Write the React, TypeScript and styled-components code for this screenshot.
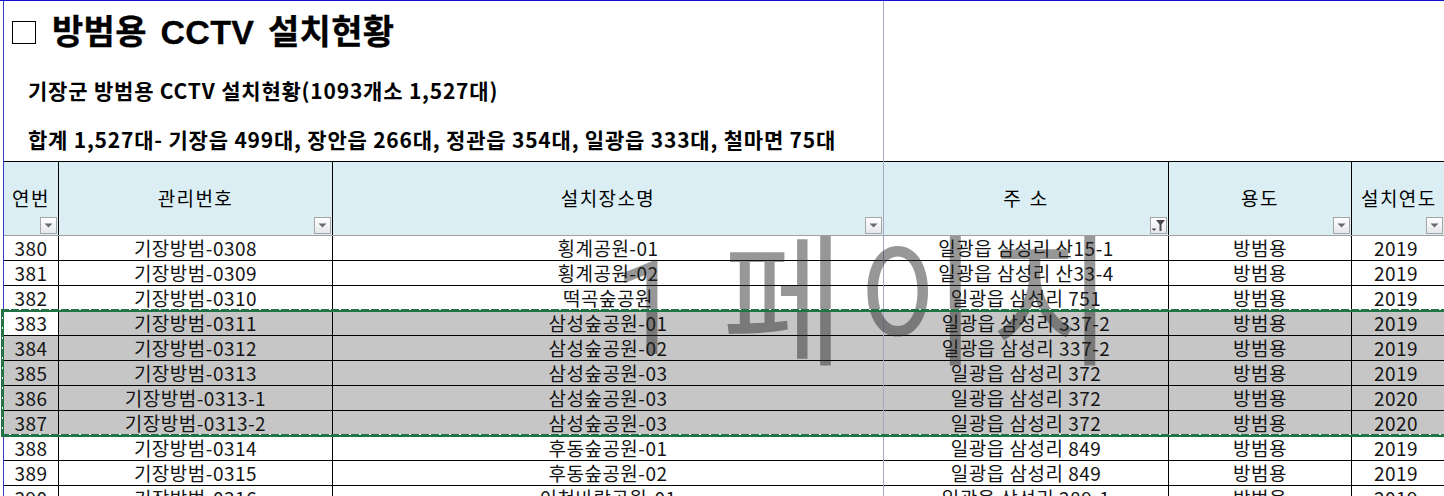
import React from "react";
import styled, { createGlobalStyle } from "styled-components";

const GlobalStyle = createGlobalStyle`
  html, body {
    margin: 0;
    padding: 0;
    background: #fff;
    overflow: hidden;
  }
`;

type Row = { no: number; code: string; place: string; addr: string; use: string; year: number };

const rows: Row[] = [
  { no: 380, code: "기장방범-0308", place: "횡계공원-01", addr: "일광읍 삼성리 산15-1", use: "방범용", year: 2019 },
  { no: 381, code: "기장방범-0309", place: "횡계공원-02", addr: "일광읍 삼성리 산33-4", use: "방범용", year: 2019 },
  { no: 382, code: "기장방범-0310", place: "떡곡숲공원", addr: "일광읍 삼성리 751", use: "방범용", year: 2019 },
  { no: 383, code: "기장방범-0311", place: "삼성숲공원-01", addr: "일광읍 삼성리 337-2", use: "방범용", year: 2019 },
  { no: 384, code: "기장방범-0312", place: "삼성숲공원-02", addr: "일광읍 삼성리 337-2", use: "방범용", year: 2019 },
  { no: 385, code: "기장방범-0313", place: "삼성숲공원-03", addr: "일광읍 삼성리 372", use: "방범용", year: 2019 },
  { no: 386, code: "기장방범-0313-1", place: "삼성숲공원-03", addr: "일광읍 삼성리 372", use: "방범용", year: 2020 },
  { no: 387, code: "기장방범-0313-2", place: "삼성숲공원-03", addr: "일광읍 삼성리 372", use: "방범용", year: 2020 },
  { no: 388, code: "기장방범-0314", place: "후동숲공원-01", addr: "일광읍 삼성리 849", use: "방범용", year: 2019 },
  { no: 389, code: "기장방범-0315", place: "후동숲공원-02", addr: "일광읍 삼성리 849", use: "방범용", year: 2019 },
  { no: 390, code: "기장방범-0316", place: "이천바람공원-01", addr: "일광읍 삼성리 289-1", use: "방범용", year: 2019 },
];

const columns = "55px 274px 551px 285px 183px 1fr";
const font = `"Noto Sans CJK KR", "Noto Sans", sans-serif`;

const Sheet = styled.div`
  position: relative;
  width: 1444px;
  height: 496px;
  overflow: hidden;
  box-sizing: border-box;
  padding-left: 3px;
  border-top: 1px solid #1010d0;
  font-family: ${font};
  color: #000;
  background: #fff;
`;

const Body = styled.div`
  border-left: 1px solid #3a3ac8;
  height: 100%;
`;

const TitleBlock = styled.div`
  height: 160px;
  box-sizing: border-box;
  padding: 13px 0 0 8px;
`;

const Title = styled.h1`
  margin: 0;
  font-size: 34px;
  line-height: 36px;
  font-weight: 700;
  font-family: "Liberation Sans", ${font};
  letter-spacing: 0.3px;
  word-spacing: 4px;
  -webkit-text-stroke: 0.3px #000;
  display: flex;
  align-items: center;
  gap: 16px;
`;

const TitleBox = styled.span`
  display: block;
  width: 24px;
  height: 23px;
  box-sizing: border-box;
  border: 1.5px solid #000;
`;

const Sub = styled.p<{ $top: number }>`
  margin: ${(p) => p.$top}px 0 0 16px;
  font-size: 21px;
  line-height: 26px;
  font-weight: 700;
  letter-spacing: 0.8px;
  white-space: nowrap;
`;

const Grid = styled.div`
  display: grid;
  grid-template-columns: ${columns};
`;

const HeadCell = styled.div`
  position: relative;
  height: 74px;
  box-sizing: border-box;
  border-top: 1px solid #000;
  border-right: 1px solid #000;
  background: #daeef3;
  font-size: 19px;
  letter-spacing: 1.4px;
  word-spacing: 2px;
  display: flex;
  align-items: center;
  justify-content: center;
  padding-bottom: 3px;
  white-space: nowrap;
  &:last-child { border-right: 0; justify-content: flex-start; padding-left: 9px; }
`;

const FilterButton = styled.span`
  position: absolute;
  right: 1px;
  bottom: 1px;
  width: 17px;
  height: 17px;
  box-sizing: border-box;
  border: 1px solid #a6a6a6;
  background: linear-gradient(#ffffff, #e6e8ec);
  display: flex;
  align-items: center;
  justify-content: center;
`;

const HeadRule = styled.div`
  height: 1px;
  background: #a0a0a0;
`;

const Cell = styled.div<{ $shaded?: boolean }>`
  height: 25px;
  box-sizing: border-box;
  border-right: 1px solid #000;
  border-bottom: 1px solid #000;
  background: ${(p) => (p.$shaded ? "#c6c6c6" : "#fff")};
  font-family: "Liberation Sans Narrow", ${font};
  font-size: 19px;
  letter-spacing: 0.5px;
  line-height: 23px;
  color: #141414;
  text-align: center;
  white-space: nowrap;
  &:nth-child(6n) { border-right: 0; padding-right: 4px; }
`;

const Selection = styled.div`
  position: absolute;
  left: 1px;
  right: -4px;
  top: 308px;
  height: 128px;
  box-sizing: border-box;
  border: 3px solid #217346;
  pointer-events: none;
  &::before {
    content: "";
    position: absolute;
    inset: -3px;
    background:
      repeating-linear-gradient(90deg, transparent 0 8px, #fff 8px 10px) left top / 100% 1px no-repeat,
      repeating-linear-gradient(90deg, transparent 0 8px, #fff 8px 10px) left bottom 2px / 100% 1px no-repeat,
      repeating-linear-gradient(0deg, transparent 0 8px, #fff 8px 10px) left 1px top / 1px 100% no-repeat;
  }
`;

const PageLine = styled.div`
  position: absolute;
  left: 883px;
  top: 0;
  bottom: 0;
  width: 1px;
  background: #a4a8c0;
  pointer-events: none;
`;

const Watermark = styled.div`
  position: absolute;
  left: 614px;
  top: 205px;
  font-size: 132px;
  line-height: 160px;
  white-space: nowrap;
  color: rgba(34, 34, 34, 0.47);
  letter-spacing: 13px;
  word-spacing: -16px;
  transform: scaleY(1.08);
  transform-origin: left top;
  pointer-events: none;
`;

const WatermarkDigit = styled.span`
  font-family: Roboto, sans-serif;
  font-size: 122px;
`;

const Arrow = () => (
  <svg width="9" height="5" viewBox="0 0 9 5">
    <path d="M0.5 0.5h8L4.5 4.5z" fill="#6b6b6b" />
  </svg>
);

const Funnel = () => (
  <svg width="15" height="13" viewBox="0 0 15 13">
    <path d="M5 1h9L10.5 5.5V12h-2V5.5z" fill="#4a4a4a" />
    <path d="M0.5 9.5h5L3 12z" fill="#4a4a4a" />
  </svg>
);

const headers = ["연번", "관리번호", "설치장소명", "주 소", "용도", "설치연도"];

const App: React.FC = () => {
  return (
    <Sheet>
      <GlobalStyle />
      <Body>
        <TitleBlock>
          <Title>
            <TitleBox />
            방범용 CCTV 설치현황
          </Title>
          <Sub $top={27}>기장군 방범용 CCTV 설치현황(1093개소 1,527대)</Sub>
          <Sub $top={23}>합계 1,527대- 기장읍 499대, 장안읍 266대, 정관읍 354대, 일광읍 333대, 철마면 75대</Sub>
        </TitleBlock>
        <Grid>
          {headers.map((h, i) => (
            <HeadCell key={h}>
              {h}
              <FilterButton>{i === 3 ? <Funnel /> : <Arrow />}</FilterButton>
            </HeadCell>
          ))}
        </Grid>
        <HeadRule />
        <Grid>
          {rows.map((r) => {
            const shaded = r.no >= 383 && r.no <= 387;
            return (
              <React.Fragment key={r.no}>
                <Cell $shaded={shaded && r.no !== 383}>{r.no}</Cell>
                <Cell $shaded={shaded}>{r.code}</Cell>
                <Cell $shaded={shaded}>{r.place}</Cell>
                <Cell $shaded={shaded}>{r.addr}</Cell>
                <Cell $shaded={shaded}>{r.use}</Cell>
                <Cell $shaded={shaded}>{r.year}</Cell>
              </React.Fragment>
            );
          })}
        </Grid>
      </Body>
      <PageLine />
      <Watermark>
        <WatermarkDigit>1</WatermarkDigit> 페이지
      </Watermark>
      <Selection />
    </Sheet>
  );
};

export default App;
